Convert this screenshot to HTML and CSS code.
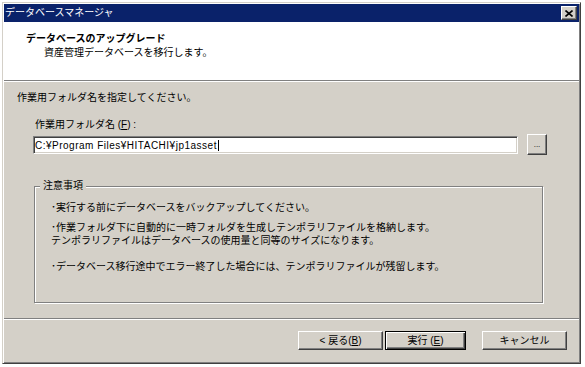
FILE: index.html
```html
<!DOCTYPE html>
<html lang="ja">
<head>
    <meta charset="UTF-8">
    <meta name="viewport" content="width=device-width, initial-scale=1.0">
    <title>データベースマネージャ</title>
    <link rel="stylesheet" href="styles.css">
</head>
<body>
    <div class="window">
        <div class="titlebar">
            <span class="title">データベースマネージャ</span>
            <button class="close" type="button" aria-label="閉じる">
                <svg width="8" height="7" viewBox="0 0 8 7">
                    <path d="M0.5 0.5 L7.5 6.5 M7.5 0.5 L0.5 6.5" stroke="#000" stroke-width="1.6" fill="none"/>
                </svg>
            </button>
        </div>

        <div class="header">
            <div class="header-title">データベースのアップグレード</div>
            <div class="header-sub">資産管理データベースを移行します。</div>
        </div>

        <div class="content">
            <p class="intro">作業用フォルダ名を指定してください。</p>

            <label class="folder-label" for="folder">作業用フォルダ名 (<u>F</u>) :</label>
            <div class="folder-row">
                <div class="textbox" id="folder"><span class="caret">C:¥Program Files¥HITACHI¥jp1asset</span></div>
                <button class="btn browse" type="button">...</button>
            </div>

            <div class="group">
                <span class="group-label">注意事項</span>
                <p class="note">･実行する前にデータベースをバックアップしてください。</p>
                <p class="note">･作業フォルダ下に自動的に一時フォルダを生成しテンポラリファイルを格納します。<br>テンポラリファイルはデータベースの使用量と同等のサイズになります。</p>
                <p class="note">･データベース移行途中でエラー終了した場合には、テンポラリファイルが残留します。</p>
            </div>

            <div class="separator"></div>

            <div class="buttons">
                <button class="btn back" type="button">&lt; 戻る(<u>B</u>)</button>
                <button class="btn run default" type="button">実行 (<u>E</u>)</button>
                <button class="btn cancel" type="button">キャンセル</button>
            </div>
        </div>
    </div>
</body>
</html>
```

FILE: styles.css
```css
/* ページ全体 */
body {
    margin: 0;
    background-color: #fff;
    font-family: "Liberation Sans", "Noto Sans CJK JP", sans-serif;
    font-size: 10px;
    color: #000;
}

p {
    margin: 0;
}

/* ダイアログの枠 */
.window {
    margin: 2px 0 0 2px;
    width: 575px;
    height: 358px;
    padding: 1px;
    background-color: #d4d0c8;
    border: 1px solid;
    border-color: #d4d0c8 #404040 #404040 #d4d0c8;
    box-shadow: inset 1px 1px 0 #fff, inset -1px -1px 0 #808080;
    display: flex;
    flex-direction: column;
}

/* タイトルバー */
.titlebar {
    height: 18px;
    background-color: #0a226a;
    color: #fff;
    display: flex;
    align-items: center;
    justify-content: space-between;
    padding: 0 2px 0 1px;
    line-height: 14px;
}

.close {
    width: 16px;
    height: 14px;
    padding: 0;
    background-color: #d4d0c8;
    border: 1px solid;
    border-color: #fff #404040 #404040 #fff;
    box-shadow: inset -1px -1px 0 #808080;
    display: flex;
    align-items: center;
    justify-content: center;
}

/* 白いヘッダー */
.header {
    height: 48px;
    padding-top: 10px;
    background-color: #fff;
    border-bottom: 1px solid #808080;
    line-height: 14px;
}

.header-title {
    padding-left: 22px;
    font-weight: bold;
}

.header-sub {
    padding-left: 40px;
}

/* 本体 */
.content {
    flex: 1;
    border-top: 1px solid #fff;
    line-height: 14px;
}

.intro {
    margin: 9px 0 0 13px;
}

.folder-label {
    display: block;
    margin: 13px 0 0 31px;
}

u {
    text-decoration: underline;
    text-underline-offset: 1px;
}

.folder-row {
    display: flex;
    align-items: center;
    margin: 2px 0 0 29px;
}

/* テキストボックス（くぼみ） */
.textbox {
    width: 482px;
    height: 14px;
    padding-left: 1px;
    background-color: #fff;
    border: 1px solid;
    border-color: #808080 #fff #fff #808080;
    box-shadow: inset 1px 1px 0 #404040, inset -1px -1px 0 #d4d0c8;
    padding-top: 2px;
    line-height: 13px;
    letter-spacing: 0.5px;
}

.caret {
    padding-right: 1px;
    border-right: 1px solid #000;
}

/* ボタン共通 */
.btn {
    font: inherit;
    color: #000;
    background-color: #d4d0c8;
    border: 1px solid;
    border-color: #fff #404040 #404040 #fff;
    box-shadow: inset -1px -1px 0 #808080;
    padding: 0;
    line-height: 14px;
}

.browse {
    width: 20px;
    height: 21px;
    margin-left: 9px;
    font-size: 8px;
}

/* 注意事項のグループ */
.group {
    position: relative;
    width: 509px;
    height: 117px;
    margin: 31px 0 0 30px;
    border: 1px solid #808080;
    box-shadow: 1px 1px 0 #fff, inset 1px 1px 0 #fff;
    padding: 14px 0 0 16px;
    box-sizing: border-box;
    line-height: 13px;
}

.group-label {
    position: absolute;
    top: -8px;
    left: 5px;
    padding: 0 3px;
    background-color: #d4d0c8;
    line-height: 14px;
}

.note + .note {
    margin-top: 7px;
}

.note:last-child {
    margin-top: 13px;
}

.separator {
    margin-top: 15px;
    border-top: 1px solid #808080;
    border-bottom: 1px solid #fff;
}

/* 下部のボタン */
.buttons {
    display: flex;
    justify-content: flex-end;
    margin-top: 11px;
    padding-right: 12px;
}

.buttons .btn {
    height: 19px;
}

.back {
    width: 85px;
}

.run {
    width: 81px;
    margin-left: 2px;
}

.cancel {
    width: 85px;
    margin-left: 16px;
}

.default {
    border: 1px solid #000;
    box-shadow: inset 1px 1px 0 #fff, inset -1px -1px 0 #404040, inset -2px -2px 0 #808080;
}
```
